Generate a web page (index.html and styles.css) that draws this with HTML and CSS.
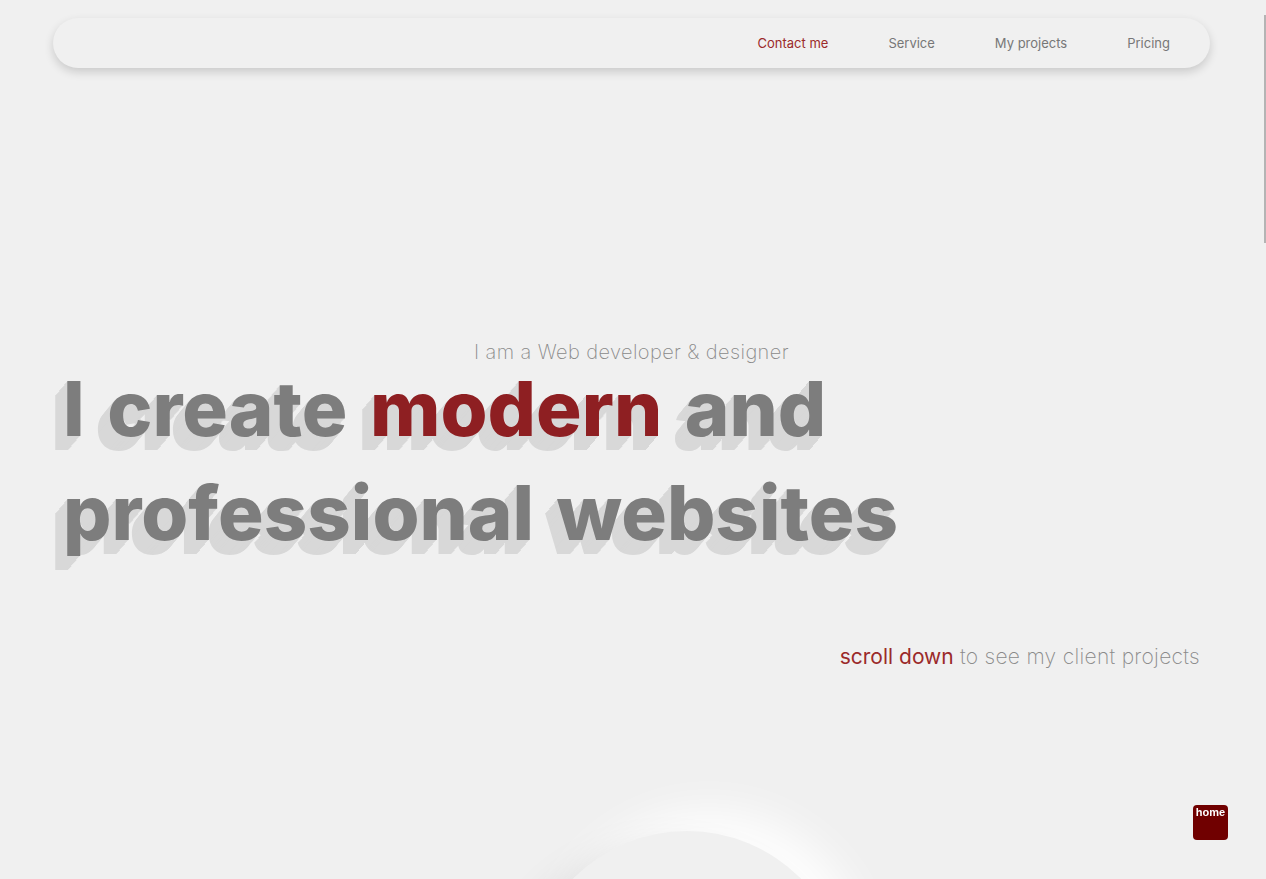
FILE: index.html
```html
<!DOCTYPE html>
<html lang="en">
<head>
<meta charset="utf-8">
<title>Portfolio</title>
<link rel="stylesheet" href="styles.css">
</head>
<body>
<header class="topbar">
  <nav class="nav">
    <a class="nav-link active" href="#">Contact me</a>
    <a class="nav-link" href="#">Service</a>
    <a class="nav-link" href="#">My projects</a>
    <a class="nav-link" href="#">Pricing</a>
  </nav>
</header>
<main class="hero">
  <p class="subtitle">I am a Web developer &amp; designer</p>
  <h1 class="headline"><span class="line">I create <span class="accent">modern</span> and</span><span class="line">professional websites</span></h1>
  <p class="scroll-hint"><span class="accent-soft">scroll down</span> to see my client projects</p>
</main>
<section class="orb-area">
  <div class="orb"></div>
</section>
<a class="home-btn" href="#">home</a>
<div class="scroll-thumb"></div>
</body>
</html>
```
FILE: styles.css
```css
html, body {
  margin: 0;
  padding: 0;
}
body {
  background: #f0f0f0;
  font-family: "Inter", "Open Sans", sans-serif;
  height: 879px;
  overflow: hidden;
}
.topbar {
  padding: 18px 56px 0 53px;
}
.nav {
  height: 50px;
  border-radius: 25px;
  background: #f0f0f0;
  box-shadow: 0 4px 10px rgba(0, 0, 0, 0.16);
  display: flex;
  justify-content: flex-end;
  align-items: center;
  gap: 60px;
  padding-right: 40px;
}
.nav-link {
  font-size: 13px;
  color: #777;
  text-decoration: none;
}
.nav-link.active {
  color: #9b2a2a;
}
.hero {
  padding: 270px 66px 0 63px;
}
.subtitle {
  margin: 0;
  text-align: center;
  font-size: 20px;
  font-weight: 200;
  letter-spacing: 0.4px;
  color: #8a8a8a;
  line-height: 28px;
}
.headline {
  margin: -10px 0 0;
  font-size: 76px;
  font-weight: 800;
  line-height: 104px;
  word-spacing: 6px;
  color: #7d7d7d;
  display: flex;
  flex-direction: column;
  text-shadow: -1px 1px #d8d8d8, -2px 2px #d8d8d8, -3px 3px #d8d8d8, -4px 5px #d8d8d8, -5px 6px #d8d8d8, -6px 7px #d8d8d8, -7px 8px #d8d8d8, -8px 9px #d8d8d8, -9px 11px #d8d8d8, -10px 12px #d8d8d8, -11px 13px #d8d8d8, -12px 14px #d8d8d8;
}
.accent {
  color: #8e1f22;
}
.scroll-hint {
  margin: 80px 0 0;
  text-align: right;
  font-size: 21px;
  font-weight: 200;
  letter-spacing: 0.3px;
  color: #8a8a8a;
}
.accent-soft {
  color: #9b2a2a;
  font-weight: 400;
  letter-spacing: 0;
}
.orb-area {
  display: flex;
  justify-content: center;
  padding: 162px 0 0 108px;
}
.orb {
  width: 320px;
  height: 320px;
  border-radius: 50%;
  background: #f0f0f0;
  box-shadow: -22px 22px 40px rgba(0, 0, 0, 0.13), 22px -22px 40px rgba(255, 255, 255, 0.85);
}
.home-btn {
  position: fixed;
  left: 1193px;
  top: 805px;
  width: 35px;
  height: 35px;
  border-radius: 4px;
  background: #700000;
  color: #fff;
  font-family: "Liberation Sans", Arial, sans-serif;
  font-weight: 700;
  font-size: 11px;
  text-align: center;
  line-height: 15px;
  text-decoration: none;
}
.scroll-thumb {
  position: fixed;
  right: 0;
  top: 15px;
  width: 2px;
  height: 228px;
  background: #b4b4b4;
}
```
